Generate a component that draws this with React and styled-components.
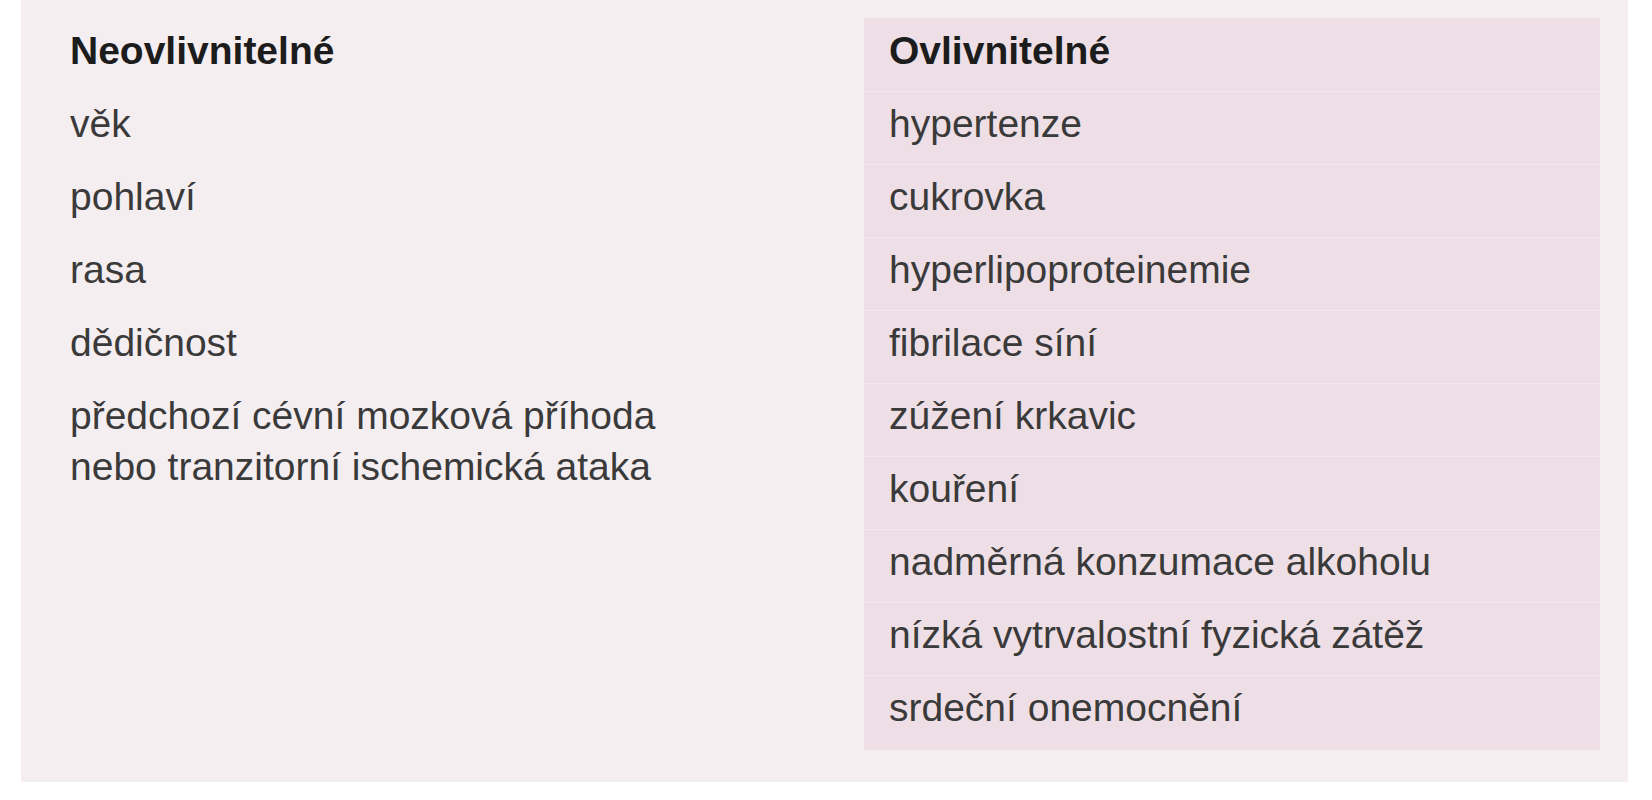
import styled, { createGlobalStyle } from "styled-components";

const GlobalStyle = createGlobalStyle`
  body {
    margin: 0;
    background: #ffffff;
    font-family: "Liberation Sans", Arial, sans-serif;
  }
`;

const fixed = ["věk", "pohlaví", "rasa", "dědičnost", "předchozí cévní mozková příhoda nebo tranzitorní ischemická ataka"];
const modifiable = [
  "hypertenze",
  "cukrovka",
  "hyperlipoproteinemie",
  "fibrilace síní",
  "zúžení krkavic",
  "kouření",
  "nadměrná konzumace alkoholu",
  "nízká vytrvalostní fyzická zátěž",
  "srdeční onemocnění",
];

export default function App() {
  return (
    <>
      <GlobalStyle />
      <Panel>
        <Column>
          <Heading>Neovlivnitelné</Heading>
          {fixed.map((item) => (
            <Cell key={item} $narrow>{item}</Cell>
          ))}
        </Column>
        <Column $shaded>
          <Heading>Ovlivnitelné</Heading>
          {modifiable.map((item) => (
            <Cell key={item} $lined>{item}</Cell>
          ))}
        </Column>
      </Panel>
    </>
  );
}

const Panel = styled.div`
  width: 1607px;
  height: 782px;
  margin-left: 21px;
  box-sizing: border-box;
  padding: 18px 28px 32px 24px;
  background: #f5eef1;
  display: grid;
  grid-template-columns: 819px 736px;
  align-items: start;
`;

const Column = styled.div`
  display: flex;
  flex-direction: column;
  padding-bottom: ${(p) => (p.$shaded ? "2px" : "0")};
  background: ${(p) => (p.$shaded ? "#eedfe6" : "transparent")};
`;

const Cell = styled.div`
  padding: 6px 25px 15px 25px;
  font-size: 39px;
  line-height: 51px;
  color: #3a3a3a;
  max-width: ${(p) => (p.$narrow ? "690px" : "none")};
  box-sizing: border-box;
  border-top: 1px solid ${(p) => (p.$lined ? "#f2e7ec" : "transparent")};
`;

const Heading = styled(Cell)`
  font-weight: 700;
  color: #1c1c1c;
  border-top-color: transparent;
`;
